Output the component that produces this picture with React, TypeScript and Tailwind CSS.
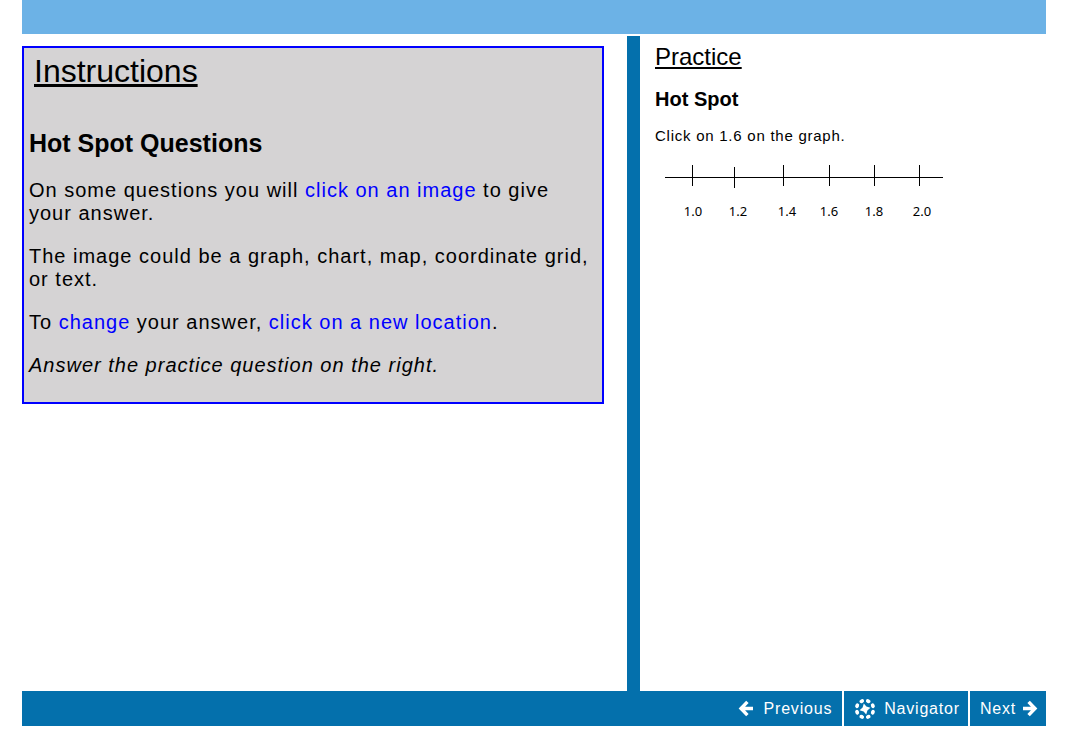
import React from 'react';

interface Tick {
  label: string;
  x: number;
  top: number;
  labelX: number;
}

const ticks: Tick[] = [
  { label: '1.0', x: 37, top: 5, labelX: 38 },
  { label: '1.2', x: 79, top: 7, labelX: 83 },
  { label: '1.4', x: 128, top: 5, labelX: 132 },
  { label: '1.6', x: 174, top: 5, labelX: 174 },
  { label: '1.8', x: 219, top: 5, labelX: 219 },
  { label: '2.0', x: 264, top: 5, labelX: 267 },
];

const NumberLine: React.FC = () => (
  <svg
    width="300"
    height="62"
    viewBox="0 0 300 62"
    role="img"
    aria-label="Number line from 1.0 to 2.0"
    className="block max-w-full"
  >
    <path d="M10 17.5H288" stroke="black" fill="none" />
    {ticks.map((tick) => (
      <g key={tick.label}>
        <path d={`M${tick.x + 0.5} ${tick.top}v21`} stroke="black" fill="none" />
        <text x={tick.labelX} y="56" textAnchor="middle" className="font-['Noto_Sans',sans-serif] text-[13px]">
          {tick.label}
        </text>
      </g>
    ))}
  </svg>
);

const ArrowIcon: React.FC<{ direction: 'left' | 'right' }> = ({ direction }) => (
  <svg
    width="16"
    height="18"
    viewBox="0 0 16 18"
    fill="none"
    stroke="currentColor"
    strokeWidth="3.4"
    aria-hidden="true"
  >
    {direction === 'left' ? (
      <path d="M9.4 1.8L3 8.5l6.4 6.7M3.4 8.5h11.6" />
    ) : (
      <path d="M6.6 1.8L13 8.5l-6.4 6.7M12.6 8.5H1" />
    )}
  </svg>
);

const CompassIcon: React.FC = () => (
  <svg width="22" height="22" viewBox="0 0 22 22" fill="currentColor" aria-hidden="true">
    {[22.5, 67.5, 112.5, 157.5, 202.5, 247.5, 292.5, 337.5].map((angle) => (
      <ellipse key={angle} cx="11" cy="2.5" rx="2.4" ry="1.9" transform={`rotate(${angle} 11 11)`} />
    ))}
    <path d="M9.8 5.6l2.6 3 4 1.2-3 2.6-1.2 4-2.6-3-4-1.2 3-2.6z" />
  </svg>
);

const navButton = 'flex h-full items-center bg-[#0470ac] hover:bg-[#0562a0]';

const App: React.FC = () => {
  return (
    <div className="flex min-h-screen flex-col bg-white pb-2 pl-[22px] pr-8 font-['Liberation_Sans',Arial,sans-serif] text-black">
      <header className="h-[34px] bg-[#6cb2e6]" />

      <main className="mt-0.5 grid grow grid-cols-[605fr_13px_406fr]">
        <section className="pr-[23px] pt-2.5">
          <div className="border-2 border-[#0000ff] bg-[#d5d3d4] px-[5px] pb-[25px] pt-[5px]">
            <h1 className="pl-[5px] text-[32px] leading-[37px] underline">Instructions</h1>
            <h2 className="mt-10 text-[25px] font-bold leading-[27px]">Hot Spot Questions</h2>
            <div className="mt-[22px] space-y-5 text-[20px] leading-[23px] tracking-wider">
              <p>
                On some questions you will <span className="text-[#0000ff]">click on an image</span> to give your answer.
              </p>
              <p>The image could be a graph, chart, map, coordinate grid, or text.</p>
              <p>
                To <span className="text-[#0000ff]">change</span> your answer,{' '}
                <span className="text-[#0000ff]">click on a new location</span>.
              </p>
              <p className="italic">Answer the practice question on the right.</p>
            </div>
          </div>
        </section>

        <div className="bg-[#0470ac]" />

        <section className="pl-[15px] pt-2">
          <h2 className="text-[24px] leading-[26px] underline">Practice</h2>
          <h3 className="mt-[18px] text-[20px] font-bold leading-[23px]">Hot Spot</h3>
          <p className="my-4 text-[15px] leading-[17px] tracking-wider">Click on 1.6 on the graph.</p>
          <NumberLine />
        </section>
      </main>

      <footer className="bg-[#0470ac] text-white">
        <nav className="flex h-[35px] justify-end text-[16px] tracking-wider">
          <button type="button" className={`${navButton} gap-2.5 px-2.5`}>
            <ArrowIcon direction="left" />
            Previous
          </button>
          <button type="button" className={`${navButton} gap-2 border-x-2 border-white pl-2.5 pr-2`}>
            <CompassIcon />
            Navigator
          </button>
          <button type="button" className={`${navButton} gap-1.5 pl-2.5 pr-2`}>
            Next
            <ArrowIcon direction="right" />
          </button>
        </nav>
      </footer>
    </div>
  );
};

export default App;
